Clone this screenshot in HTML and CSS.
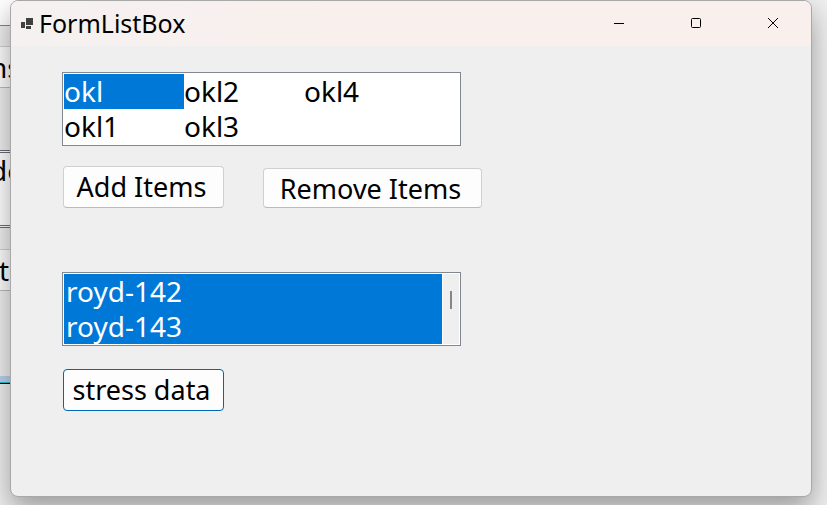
FILE: index.html
```
<!DOCTYPE html>
<html lang="en">
<head>
    <meta charset="UTF-8">
    <meta name="viewport" content="width=device-width, initial-scale=1.0">
    <title>FormListBox</title>
    <link rel="stylesheet" href="styles.css">
</head>
<body>
    <!-- Form that sits behind the main window -->
    <div class="back-form" aria-hidden="true">
        <div class="back-title"></div>
        <div class="back-panel"></div>
        <div class="back-button">ns</div>
        <div class="back-gap"></div>
        <div class="back-list">de</div>
        <div class="back-gap-small"></div>
        <div class="back-button">t</div>
        <div class="back-space"></div>
        <div class="back-edge"></div>
    </div>

    <main class="window">
        <header class="title-bar">
            <svg class="app-icon" width="12" height="12" viewBox="0 0 12 12" fill="#404040">
                <path d="M5 0h7v7H5zM0 4h4v6H0zM5 8h5v3H5z"></path>
            </svg>
            <h1 class="title">FormListBox</h1>
            <div class="window-buttons">
                <button class="window-btn" type="button" aria-label="Minimize">
                    <svg width="10" height="10" viewBox="0 0 10 10" fill="none" stroke="#000">
                        <path d="M0 5.5h10"></path>
                    </svg>
                </button>
                <button class="window-btn" type="button" aria-label="Maximize">
                    <svg width="10" height="10" viewBox="0 0 10 10" fill="none" stroke="#000">
                        <rect x="0.5" y="0.5" width="9" height="9" rx="1"></rect>
                    </svg>
                </button>
                <button class="window-btn" type="button" aria-label="Close">
                    <svg width="10" height="10" viewBox="0 0 10 10" fill="none" stroke="#000">
                        <path d="M0 0l10 10M10 0L0 10"></path>
                    </svg>
                </button>
            </div>
        </header>

        <div class="form-body">
            <ul class="list-box columns" role="listbox" aria-label="Items" tabindex="0">
                <li class="item selected" role="option" aria-selected="true">okl</li>
                <li class="item" role="option">okl1</li>
                <li class="item" role="option">okl2</li>
                <li class="item" role="option">okl3</li>
                <li class="item" role="option">okl4</li>
            </ul>
            <div class="button-row">
                <button class="btn" type="button">Add Items</button>
                <button class="btn btn-wide" type="button">Remove Items</button>
            </div>
            <div class="list-box scrolling">
                <select class="data-list" multiple size="2" aria-label="Data">
                    <option class="data-item" selected>royd-142</option>
                    <option class="data-item" selected>royd-143</option>
                </select>
                <div class="scroll-track">
                    <div class="scroll-thumb"></div>
                </div>
            </div>
            <button class="btn btn-default" type="button">stress data</button>
        </div>
    </main>
</body>
</html>
```

FILE: styles.css
```
* {
    box-sizing: border-box;
}
body {
    margin: 0;
    min-height: 100vh;
    padding: 0 15px 8px 10px;
    display: flex;
    background-color: #efefef;
    color: #000;
    font-family: "Noto Sans", "Open Sans", sans-serif;
    font-size: 28px;
    line-height: 35px;
    overflow: hidden;
}

/* Form behind */
.back-form {
    position: absolute;
    top: 0;
    left: -10px;
    width: 28px;
    text-align: center;
}
.back-title {
    height: 26px;
    background-color: #fff;
    border-bottom: 1px solid #82858f;
}
.back-panel {
    height: 20px;
}
.back-button {
    height: 42px;
    background-color: #fdfdfd;
    border-top: 1px solid #d0d0d0;
    border-bottom: 1px solid #bbb;
    line-height: 40px;
}
.back-gap {
    height: 62px;
}
.back-list {
    height: 78px;
    background-color: #fff;
    border-top: 3px double #6a6d75;
    border-bottom: 3px double #6a6d75;
}
.back-gap-small {
    height: 21px;
}
.back-space {
    height: 85px;
}
.back-edge {
    height: 8px;
    background-color: #b9d1ee;
    border-bottom: 1px solid #000;
    box-shadow: inset 0 -1px 0 #1fbfd0;
}

/* Main window */
.window {
    position: relative;
    flex: 1;
    display: flex;
    flex-direction: column;
    background-color: #efefef;
    border: 1px solid #a8a8a8;
    border-radius: 8px;
    box-shadow: 0 12px 28px rgba(0, 0, 0, 0.36);
    overflow: hidden;
}
.title-bar {
    height: 45px;
    padding-left: 10px;
    display: flex;
    align-items: center;
    background: linear-gradient(to right, #f4f1f0, #f9f0ed 40%);
}
.app-icon {
    display: block;
}
.title {
    margin: 0 0 0 6px;
    flex: 1;
    font-size: 25px;
    font-weight: 400;
}
.window-buttons {
    display: flex;
    height: 44px;
    align-self: flex-start;
}
.window-btn {
    width: 77px;
    padding: 0;
    display: flex;
    align-items: center;
    justify-content: center;
    border: 0;
    background: none;
}
.window-btn:hover {
    background-color: #e9e0dd;
}

.form-body {
    padding: 26px 51px;
    display: flex;
    flex-direction: column;
    align-items: flex-start;
}
.list-box {
    width: 399px;
    height: 74px;
    margin: 0;
    padding: 1px;
    background-color: #fff;
    border: 1px solid #828790;
}
.columns {
    display: grid;
    grid-template-rows: 35px 35px;
    grid-auto-columns: 120px;
    grid-auto-flow: column;
    list-style: none;
}
.item {
    cursor: default;
}
.selected {
    background-color: #0078d7;
    color: #fff;
}
.button-row {
    margin: 20px 0 64px;
    padding-left: 1px;
    display: flex;
    align-items: flex-end;
    gap: 39px;
}
.btn {
    width: 161px;
    height: 42px;
    padding: 0 4px 2px 0;
    background-color: #fdfdfd;
    border: 1px solid #d0d0d0;
    border-bottom-color: #bbb;
    border-radius: 4px;
    color: #000;
    font: inherit;
    font-size: 27px;
}
.btn-wide {
    width: 219px;
    height: 40px;
    padding-bottom: 0;
}
.btn-default {
    margin: 23px 0 0 1px;
    border-color: #0067b8;
}

/* List with its scrollbar */
.scrolling {
    display: flex;
    gap: 1px;
}
.data-list {
    flex: 1;
    height: 70px;
    padding: 0;
    border: 0;
    border-radius: 0;
    outline: 0;
    background-color: #0078d7;
    font: inherit;
    overflow: hidden;
}
.data-item {
    display: flex;
    align-items: center;
    height: 35px;
    min-height: 35px;
    padding: 0 2px 1px;
}
.data-item:checked {
    background: #0078d7 linear-gradient(#0078d7, #0078d7);
    color: #fff;
}
.scroll-track {
    width: 16px;
    padding: 17px 7px;
    background-color: #efefef;
}
.scroll-thumb {
    width: 2px;
    height: 18px;
    background-color: #868686;
}
```
